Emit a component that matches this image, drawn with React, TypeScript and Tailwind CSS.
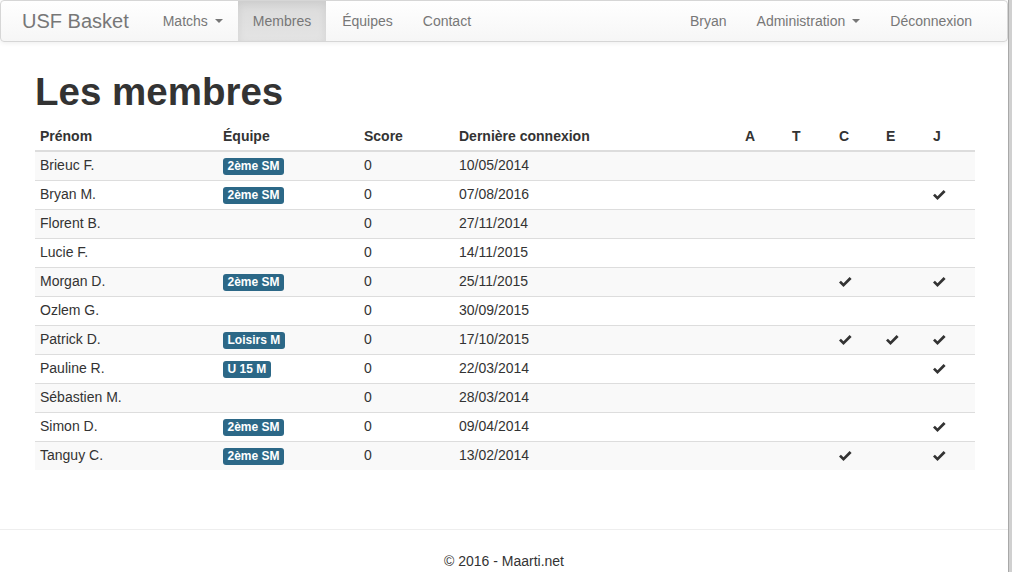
import React from 'react';

type Member = {
  name: string;
  team?: string;
  date: string;
  flags: string;
};

const members: Member[] = [
  { name: 'Brieuc F.', team: '2ème SM', date: '10/05/2014', flags: '' },
  { name: 'Bryan M.', team: '2ème SM', date: '07/08/2016', flags: 'J' },
  { name: 'Florent B.', date: '27/11/2014', flags: '' },
  { name: 'Lucie F.', date: '14/11/2015', flags: '' },
  { name: 'Morgan D.', team: '2ème SM', date: '25/11/2015', flags: 'CJ' },
  { name: 'Ozlem G.', date: '30/09/2015', flags: '' },
  { name: 'Patrick D.', team: 'Loisirs M', date: '17/10/2015', flags: 'CEJ' },
  { name: 'Pauline R.', team: 'U 15 M', date: '22/03/2014', flags: 'J' },
  { name: 'Sébastien M.', date: '28/03/2014', flags: '' },
  { name: 'Simon D.', team: '2ème SM', date: '09/04/2014', flags: 'J' },
  { name: 'Tanguy C.', team: '2ème SM', date: '13/02/2014', flags: 'CJ' },
];

const roles = ['A', 'T', 'C', 'E', 'J'];

function Caret() {
  return (
    <span className="ml-[7px] inline-block h-0 w-0 border-t-[4px] border-r-[4px] border-l-[4px] border-r-transparent border-l-transparent border-t-[#777] align-middle" />
  );
}

function Check() {
  return (
    <svg width="13" height="10" viewBox="0 0 13 10" className="block">
      <polygon points="0,5.6 1.9,3.7 4.5,6.2 10.6,0 12.6,2 4.5,10" fill="#333" />
    </svg>
  );
}

function NavItem({ label, active, caret }: { label: string; active?: boolean; caret?: boolean }) {
  return (
    <div
      className={
        'flex h-full items-center px-[15px] text-[14px] text-[#777] ' +
        (active ? 'bg-gradient-to-b from-[#dbdbdb] to-[#e4e4e4] px-[15.5px] text-[#555] shadow-[inset_0_3px_9px_rgba(0,0,0,0.075)]' : '')
      }
    >
      {label}
      {caret && <Caret />}
    </div>
  );
}

export default function App() {
  return (
    <div className="flex min-h-[572px] bg-white" style={{ fontFamily: '"Liberation Sans", Arial, sans-serif' }}>
      <div className="w-[1008px] text-[#333]">
        {/* navbar */}
        <div className="flex h-[42px] items-center overflow-hidden rounded-[4px] border border-[#d6d6d6] bg-gradient-to-b from-white to-[#f6f6f6] shadow-[inset_0_1px_0_rgba(255,255,255,0.15),0_1px_5px_rgba(0,0,0,0.075)]">
          <div className="pl-[21px] pr-[5px] text-[20px] text-[#777]">USF Basket</div>
          <div className="flex h-full items-center pl-[14px]">
            <NavItem label="Matchs" caret />
            <NavItem label="Membres" active />
            <div className="flex h-full items-center pl-[1px]">
              <NavItem label="Équipes" />
              <NavItem label="Contact" />
            </div>
          </div>
          <div className="ml-auto flex h-full items-center pr-[20px]">
            <NavItem label="Bryan" />
            <NavItem label="Administration" caret />
            <NavItem label="Déconnexion" />
          </div>
        </div>

        {/* content */}
        <div className="ml-[35px] w-[940px]">
          <h1 className="mt-[29px] mb-[10px] text-[38.5px] leading-[42px] font-bold text-[#333]">Les membres</h1>
          <table className="w-[940px] table-fixed border-collapse text-[14px]">
            <colgroup>
              <col className="w-[183px]" />
              <col className="w-[141px]" />
              <col className="w-[95px]" />
              <col className="w-[286px]" />
              <col className="w-[47px]" />
              <col className="w-[47px]" />
              <col className="w-[47px]" />
              <col className="w-[47px]" />
              <col className="w-[47px]" />
            </colgroup>
            <thead>
              <tr className="h-[28px] border-b-2 border-[#ddd] text-left">
                <th className="px-[5px] font-bold">Prénom</th>
                <th className="px-[5px] font-bold">Équipe</th>
                <th className="px-[5px] font-bold">Score</th>
                <th className="px-[5px] font-bold">Dernière connexion</th>
                {roles.map((r) => (
                  <th key={r} className="px-[5px] font-bold">
                    {r}
                  </th>
                ))}
              </tr>
            </thead>
            <tbody>
              {members.map((m, i) => (
                <tr key={m.name} className={'h-[29px] border-t border-[#ddd] ' + (i % 2 === 0 ? 'bg-[#f9f9f9]' : 'bg-white')}>
                  <td className="px-[5px] align-middle">{m.name}</td>
                  <td className="px-[5px] align-middle">
                    {m.team && (
                      <span className="inline-flex h-[17px] items-center rounded-[3px] bg-[#2c6887] px-[4.5px] text-[12px] leading-none font-bold text-white">
                        {m.team}
                      </span>
                    )}
                  </td>
                  <td className="px-[5px] align-middle">0</td>
                  <td className="px-[5px] align-middle">{m.date}</td>
                  {roles.map((r) => (
                    <td key={r} className="px-[5px] align-middle">
                      {m.flags.includes(r) && <Check />}
                    </td>
                  ))}
                </tr>
              ))}
            </tbody>
          </table>
        </div>

        {/* footer */}
        <div className="mt-[59px] border-t border-[#eee] pt-[21px] text-center text-[14px] leading-[20px] text-[#333]">
          © 2016 - Maarti.net
        </div>
      </div>
      <div className="w-[4px] border-l border-[#a8a8a8] bg-[#d0d0d0]" />
    </div>
  );
}
